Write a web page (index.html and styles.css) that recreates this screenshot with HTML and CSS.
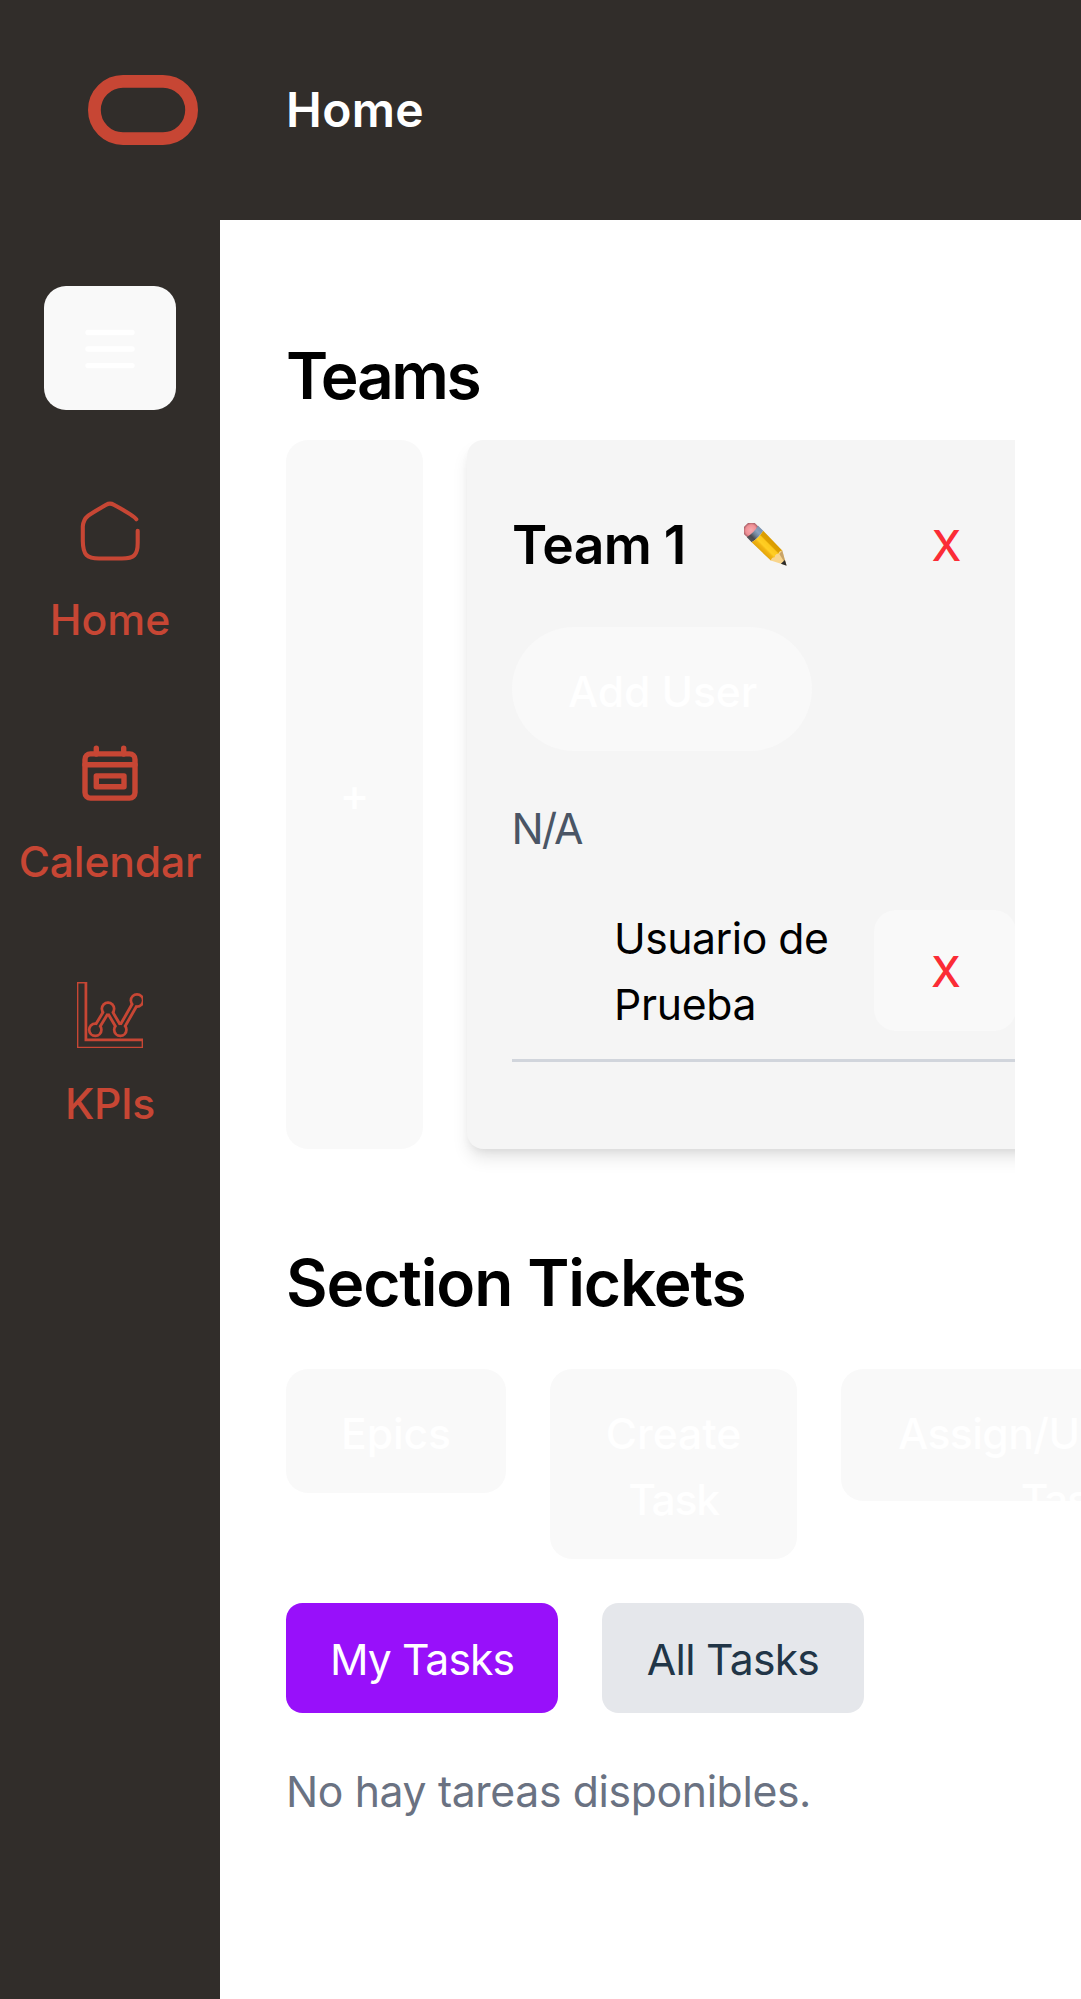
FILE: index.html
```html
<!DOCTYPE html>
<html lang="es">
<head>
<meta charset="utf-8">
<title>Home</title>
<link rel="stylesheet" href="styles.css">
</head>
<body>
<header class="topbar">
  <svg class="logo" viewBox="0 0 110 70"><rect x="6.400" y="6.400" width="97.200" height="57.200" rx="28.600"/></svg>
  <h1 class="page-title">Home</h1>
</header>
<div class="layout">
  <nav class="sidebar">
    <button class="btn menu-btn" aria-label="Menu">
      <svg class="bars" viewBox="0 0 50 40"><path d="M3 3.500h44M3 20h44M3 36.600h44"/></svg>
    </button>
    <a class="nav-item">
      <svg class="nav-icon" viewBox="0 0 66 66"><path class="home-line" d="M59.300 21.300C57 17.500 41 9.200 36.800 6.700Q33 4.400 29.200 6.700C25 9.200 14 15.500 11 17.800Q6.300 21.400 5.800 28.500V43C6 57 10 60.500 22 60.500H45C57 60.500 60.700 57 60.700 45V32.700"/></svg>
      <span class="nav-label">Home</span>
    </a>
    <a class="nav-item">
      <svg class="nav-icon" viewBox="0 0 66 66"><g class="cal-line"><rect x="8" y="13.900" width="50" height="44.200" rx="5.500"/><path d="M19.300 14V8.200M46.700 14V8.200M8 24.800h50"/><rect x="19.300" y="35.900" width="27.700" height="10.900"/></g></svg>
      <span class="nav-label label-calendar">Calendar</span>
    </a>
    <a class="nav-item">
      <svg class="nav-icon" viewBox="0 0 66 66">
        <path class="axis" d="M0 0H8.900V57.800H66V66H0Z"/>
        <g class="chart-outer"><path d="M18.300 47.800L31 26.800L43.300 47.800L60 18.500"/><circle cx="18.300" cy="47.800" r="7.500"/><circle cx="31" cy="26.800" r="7.500"/><circle cx="43.300" cy="47.800" r="7.500"/><circle cx="60" cy="18.500" r="7.500"/></g>
        <g class="chart-inner"><path d="M18.300 47.800L31 26.800L43.300 47.800L60 18.500"/><circle cx="18.300" cy="47.800" r="4.800"/><circle cx="31" cy="26.800" r="4.800"/><circle cx="43.300" cy="47.800" r="4.800"/><circle cx="60" cy="18.500" r="4.800"/></g>
      </svg>
      <span class="nav-label label-kpis">KPIs</span>
    </a>
  </nav>
  <main class="content">
    <h2 class="heading heading-teams">Teams</h2>
    <div class="teams">
      <button class="btn add-team">+</button>
      <article class="team-card">
        <div class="team-head">
          <h3 class="team-name">Team 1</h3>
          <svg class="pencil" viewBox="0 0 43 43">
            <defs>
              <linearGradient id="wood" x1="0" y1="0" x2="0" y2="1"><stop offset="0" stop-color="#d99a00"/><stop offset=".28" stop-color="#dda000"/><stop offset=".36" stop-color="#fdc81c"/><stop offset=".62" stop-color="#ffcf25"/><stop offset=".74" stop-color="#f2b411"/><stop offset="1" stop-color="#e2a40b"/></linearGradient>
              <linearGradient id="metal" x1="0" y1="0" x2="0" y2="1"><stop offset="0" stop-color="#7890ad"/><stop offset=".3" stop-color="#8aa2bd"/><stop offset=".55" stop-color="#6d7d90"/><stop offset=".75" stop-color="#4b4b4f"/><stop offset="1" stop-color="#55565a"/></linearGradient>
              <radialGradient id="rubber"><stop offset="0" stop-color="#f7a9ae"/><stop offset=".7" stop-color="#ef8f95"/><stop offset="1" stop-color="#a85f66"/></radialGradient>
            </defs>
            <g transform="rotate(45)">
              <rect x="2.800" y="-7.600" width="14" height="15.400" rx="5.500" fill="url(#rubber)"/>
              <path d="M12 -8Q14 0 12 8L19 8.200Q21 0 19 -8.200Z" fill="url(#metal)"/>
              <path d="M19 -8.200L46.500 -7.600L48.500 0L45.500 7.600L19 8.200Q21 0 19 -8.200Z" fill="url(#wood)"/>
              <path d="M46.500 -7.600L60 0L45.500 7.600Q43.500 4.500 46 2.400Q43.500 0 46 -2.600Q44.500 -5 46.500 -7.600Z" fill="#f8d58c"/>
              <path d="M46.500 -7.600L60 0L47 -3Z" fill="#c9a468"/>
              <path d="M55 -2.800L60.300 0L55 2.800Z" fill="#2b2b2b"/>
            </g>
          </svg>
          <button class="btn remove-btn remove-team">X</button>
        </div>
        <button class="btn add-user">Add User</button>
        <p class="team-desc">N/A</p>
        <div class="member">
          <span class="member-name">Usuario de<br><span class="member-last">Prueba</span></span>
          <button class="btn remove-btn remove-user">X</button>
        </div>
      </article>
    </div>
    <h2 class="heading heading-tickets">Section Tickets</h2>
    <div class="actions">
      <button class="btn action epics">Epics</button>
      <button class="btn action create">Create<br><span class="tight">Task</span></button>
      <button class="btn action assign">Assign/Unassign<br><span class="tight">Task</span></button>
    </div>
    <div class="tabs">
      <button class="tab tab-active">My Tasks</button>
      <button class="tab tab-all">All Tasks</button>
    </div>
    <p class="empty">No hay tareas disponibles.</p>
  </main>
</div>
</body>
</html>
```
FILE: styles.css
```css
* {
  box-sizing: border-box;
  margin: 0;
}

body {
  width: 1081px;
  height: 1999px;
  overflow: hidden;
  background: #fff;
  color: #000;
  font-family: Inter, "Liberation Sans", sans-serif;
  font-size: 42.7px;
  line-height: 66px;
}

button {
  border: 0;
  padding: 0;
  font: inherit;
}

/* Top bar */
.topbar {
  display: flex;
  align-items: center;
  height: 220px;
  padding-left: 88px;
  background: #312d2a;
}

.logo {
  width: 110px;
  height: 70px;
  fill: none;
  stroke: #c74634;
  stroke-width: 12.8;
}

.page-title {
  margin-left: 88px;
  color: #fff;
  font-size: 48px;
  font-weight: 600;
  letter-spacing: 0.36px;
}

.layout {
  display: flex;
  height: 1779px;
}

/* Sidebar */
.sidebar {
  display: flex;
  flex: none;
  flex-direction: column;
  align-items: center;
  width: 220px;
  padding-top: 66px;
  background: #312d2a;
  color: #c74634;
}

.btn {
  flex: none;
  border-radius: 22px;
  background: #f9f9f9;
  color: #fff;
  font-weight: 500;
  text-align: center;
}

.menu-btn {
  display: flex;
  align-items: center;
  justify-content: center;
  width: 132px;
  height: 124px;
}

.bars {
  width: 50px;
  height: 40px;
  margin-top: 2px;
  fill: none;
  stroke: #fff;
  stroke-width: 5.4;
  stroke-linecap: round;
}

.nav-item {
  display: flex;
  flex-direction: column;
  align-items: center;
  gap: 23.5px;
  margin-top: 87.5px;
}

.nav-item + .nav-item {
  margin-top: 86.5px;
}

.nav-icon {
  width: 66px;
  height: 66px;
  fill: none;
  overflow: hidden;
}

.nav-label {
  font-weight: 500;
}

.label-calendar {
  letter-spacing: -0.2px;
}

.label-kpis {
  letter-spacing: -0.36px;
}

.home-line {
  stroke: #c74634;
  stroke-width: 4.1;
  stroke-linecap: round;
}

.cal-line {
  stroke: #c74634;
  stroke-width: 5.4;
  stroke-linecap: round;
  stroke-linejoin: round;
}

.axis {
  stroke: #c74634;
  stroke-width: 2.75;
}

.chart-outer {
  fill: #c74634;
  stroke: none;
}

.chart-outer path {
  fill: none;
  stroke: #c74634;
  stroke-width: 7.8;
}

.chart-inner {
  fill: #312d2a;
  stroke: none;
}

.chart-inner path {
  fill: none;
  stroke: #312d2a;
  stroke-width: 2;
}

/* Content */
.content {
  flex: 1;
  min-width: 0;
  padding: 99.5px 66px 0;
}

.heading {
  font-size: 64px;
  font-weight: 600;
  line-height: 88px;
}

.heading-teams {
  margin-top: 12px;
  margin-bottom: 20.5px;
  letter-spacing: -2.4px;
}

.heading-tickets {
  margin-top: 61px;
  letter-spacing: -1.15px;
}

.teams {
  display: flex;
  gap: 43.5px;
  height: 738px;
  padding-bottom: 29.5px;
  overflow: hidden;
}

.add-team {
  width: 137px;
  padding-top: 2px;
  font-size: 45px;
}

.team-card {
  flex: none;
  width: 594px;
  padding: 44px;
  padding-left: 45px;
  border-radius: 16.5px;
  background: #f5f5f5;
  box-shadow: 0 11px 16.5px -2.75px rgba(0, 0, 0, 0.1), 0 5.5px 11px -5.5px rgba(0, 0, 0, 0.1);
}

.team-head {
  display: flex;
  align-items: center;
  height: 121px;
}

.team-name {
  width: 232px;
  padding-left: 0.5px;
  font-size: 53.4px;
  font-weight: 600;
  letter-spacing: -0.7px;
}

.pencil {
  flex: none;
  width: 43px;
  height: 43px;
}

.remove-btn {
  width: 142px;
  height: 121px;
  padding-left: 2px;
  color: #fb2c36;
  font-size: 42px;
}

.remove-team {
  margin-left: 88px;
  padding-top: 3px;
  background: transparent;
}

.remove-user {
  margin-top: -3px;
  padding-top: 2px;
}

.add-user {
  display: block;
  width: 300px;
  height: 124px;
  margin-top: 22px;
  padding-top: 5px;
  padding-left: 2px;
  border-radius: 62px;
  letter-spacing: -0.15px;
}

.team-desc {
  margin-top: 45px;
  color: #4a5565;
  letter-spacing: -2px;
}

.member {
  display: flex;
  align-items: center;
  margin-top: 22px;
  padding: 22px 0 21px;
  padding-left: 102.5px;
  border-bottom: 3px solid #d1d5dc;
}

.member-name {
  flex: none;
  width: 260px;
  letter-spacing: -0.48px;
}

.member-last {
  letter-spacing: -0.3px;
}

/* Ticket actions */
.actions {
  display: flex;
  align-items: flex-start;
  gap: 44px;
  height: 190px;
  margin: 42px -66px 0 0;
  overflow: hidden;
}

.action {
  padding-top: 5px;
  letter-spacing: -0.1px;
  overflow: hidden;
  white-space: nowrap;
}

.tight {
  letter-spacing: -1.3px;
}

.epics {
  width: 220px;
  height: 124px;
}

.create {
  width: 247px;
  height: 190px;
}

.assign {
  width: 450px;
  height: 132px;
  padding-top: 31.5px;
  letter-spacing: -0.6px;
}

.tabs {
  display: flex;
  gap: 44px;
  margin-top: 44px;
}

.tab {
  height: 110px;
  padding-top: 3px;
  border-radius: 16.5px;
}

.tab-active {
  width: 272px;
  background: #9810fa;
  color: #fff;
  letter-spacing: -0.95px;
}

.tab-all {
  width: 262px;
  background: #e5e7eb;
  color: #213547;
  letter-spacing: -0.75px;
}

.empty {
  margin-top: 46px;
  color: #6a7282;
  letter-spacing: -0.35px;
}
```
